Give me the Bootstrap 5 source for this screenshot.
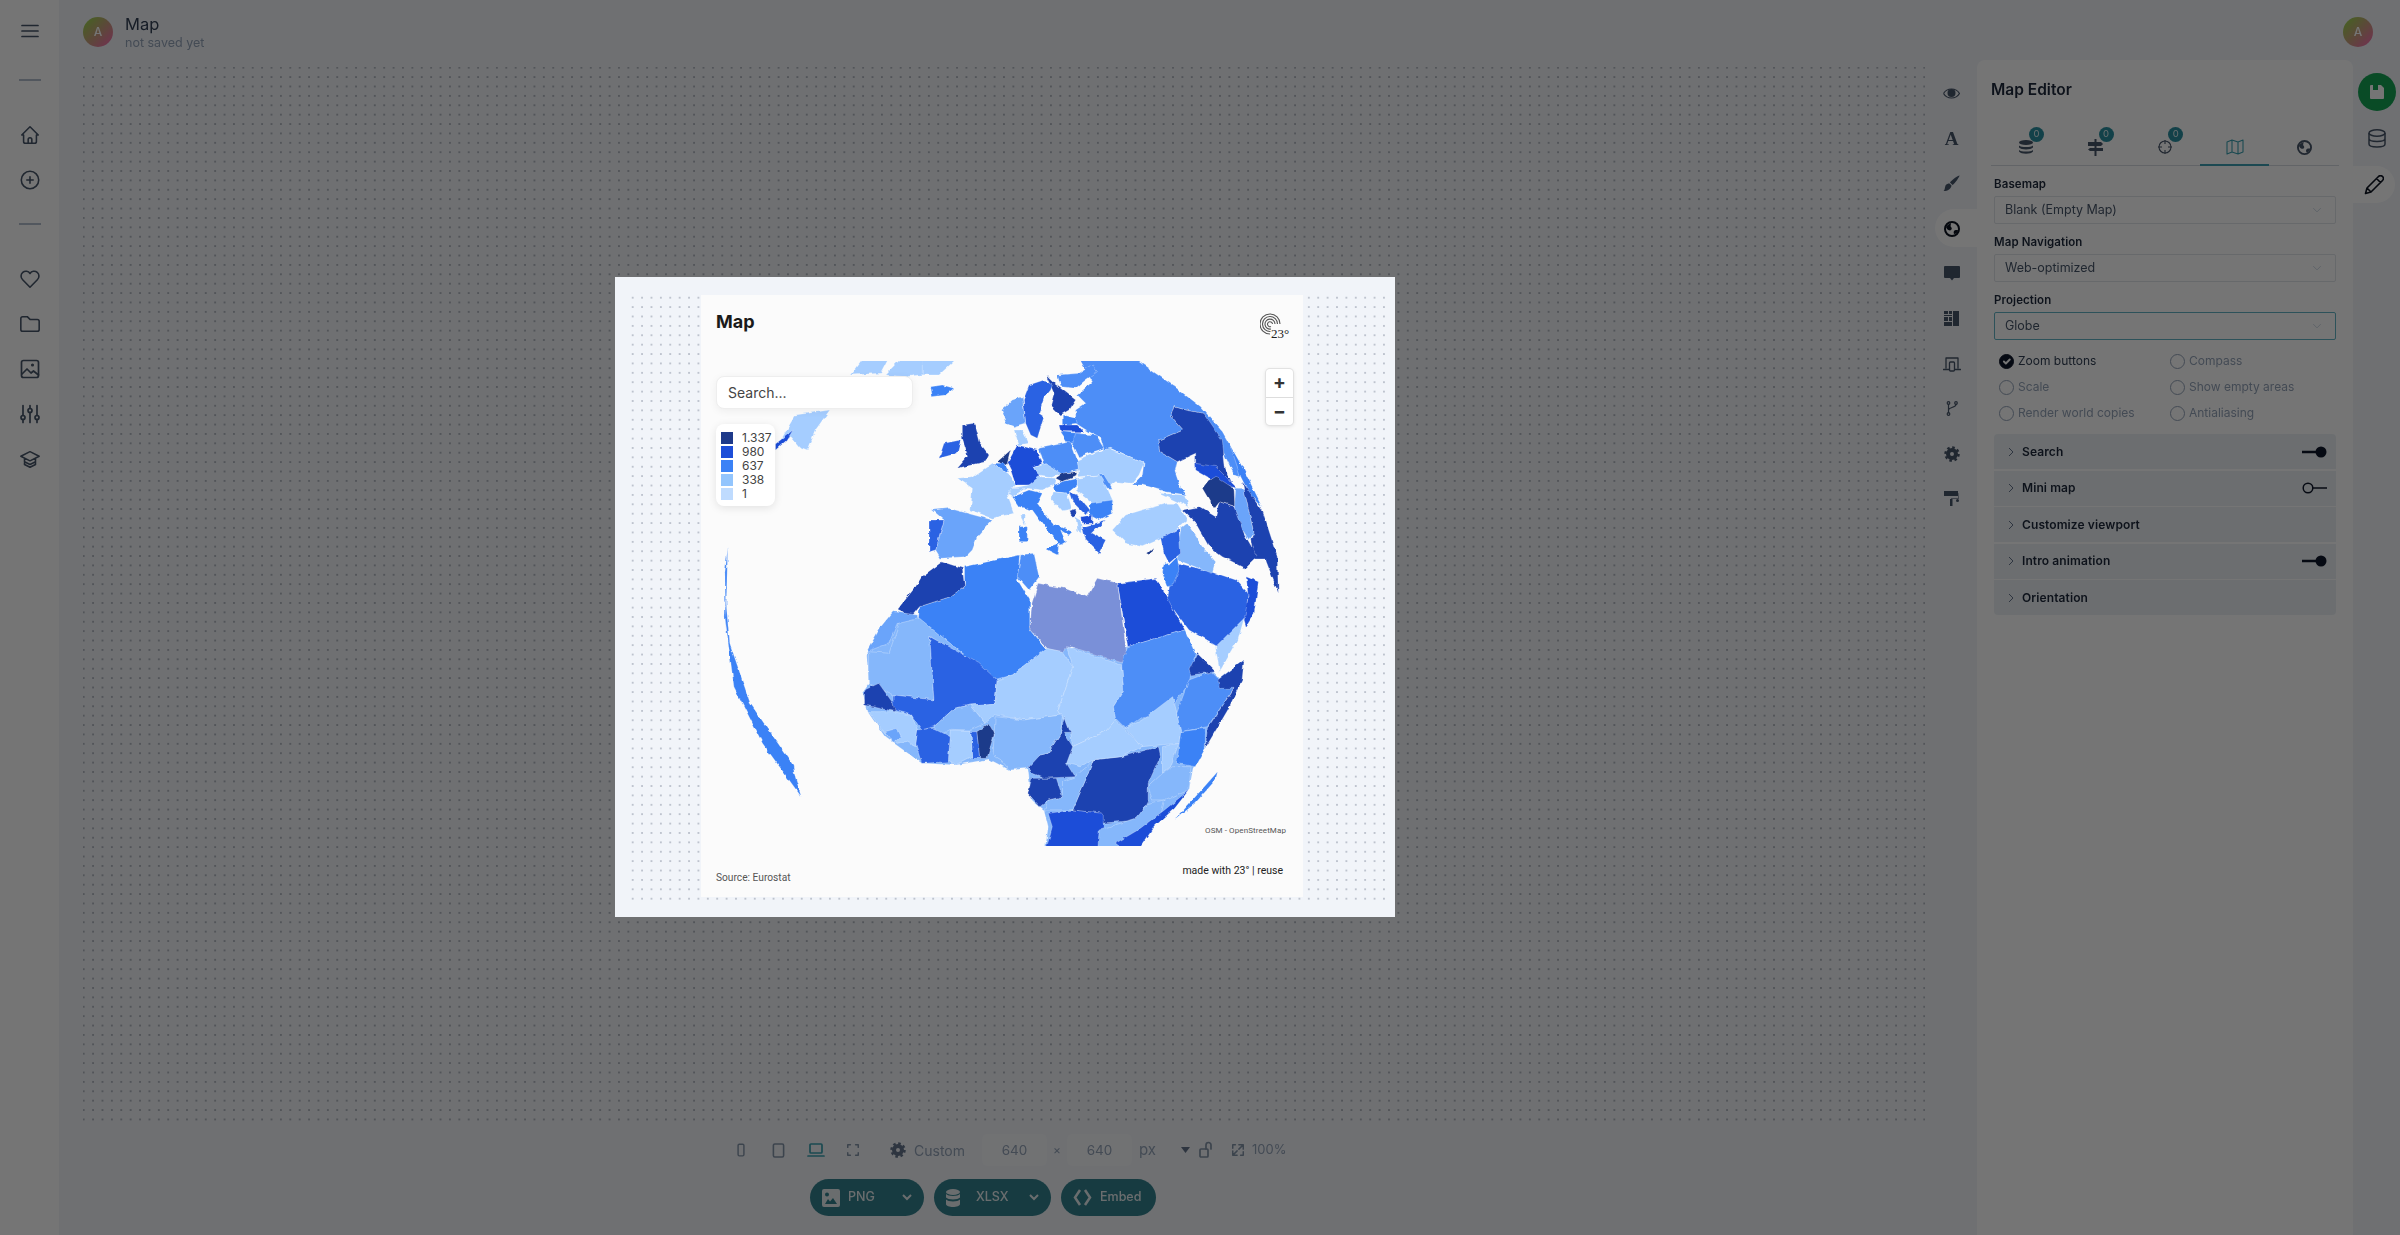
<!DOCTYPE html>
<html lang="en">

<head>
    <meta charset="UTF-8">
    <meta name="viewport" content="width=device-width, initial-scale=1.0">
    <title>Map</title>
    <link href="https://cdn.jsdelivr.net/npm/bootstrap@5.3.0/dist/css/bootstrap.min.css" rel="stylesheet">
    <style>
        html, body { height: 100%; }
        body {
            font-family: Inter, "Noto Sans", sans-serif;
            background-color: #f1f4f9;
            color: #1e293b;
            overflow: hidden;
        }
        svg { display: block; }
        .app-base { height: 100%; filter: blur(.7px); }

        /* left rail */
        .left-rail { width: 59px; background: #fff; flex: none; padding-top: 23px; }
        .left-rail hr { width: 22px; margin: 0 auto; border-color: #94a3b8; opacity: .7; border-top-width: 2px; }
        .rail-icon { height: 45px; display: flex; align-items: center; justify-content: center; color: #475569; }
        .stroke-icon { fill: none; stroke: currentColor; stroke-width: 1.7; stroke-linecap: round; stroke-linejoin: round; }

        /* top bar */
        .top-bar { height: 60px; padding: 17px 27px 0 24px; }
        .avatar {
            width: 30px; height: 30px; border-radius: 50%; flex: none;
            background: linear-gradient(135deg, #9dd04f 10%, #f070a8 90%);
            color: #fff; font-size: 12px; font-weight: 500;
            display: flex; align-items: center; justify-content: center;
        }
        .doc-title { font-size: 16.5px; line-height: 20px; margin-top: -3px; color: #334155; }
        .doc-status { font-size: 12.5px; line-height: 18px; color: #94a3b8; }

        /* canvas */
        .dot-field {
            background-image: radial-gradient(circle, #8a909c .5px, transparent .9px);
            background-size: 9.4px 9.4px;
        }
        .work-canvas { margin: 7px 7px 0 24px; height: 1059px; width: 1842px; background-position: -4px -4px; }
        .size-bar { padding-left: 663px; height: 48px; font-size: 14px; color: #94a3b8; }
        .size-bar .tool-slot { width: 37.5px; display: flex; justify-content: center; color: #8494a8; }
        .size-bar .tool-slot.is-on { color: #3aa0b0; }
        .size-icon { color: #8494a8; }
        .custom-size { margin-left: 18px; width: 92px; }
        .size-input {
            width: 65px; height: 32px; background: #f6f8fb; border-radius: 5px; font-size: 13.5px;
            color: #94a3b8; display: flex; align-items: center; justify-content: center;
        }
        .export-row { padding-left: 751px; gap: 10px; margin-top: 5px; }
        .export-btn {
            height: 37px; background: #32828f; color: #e8eef0; border: 0; padding: 0 12px; font-size: 12.5px; font-weight: 500;
            display: flex; align-items: center; gap: 8px; border-radius: 19px;
        }

        /* icon tabs */
        .tool-column { width: 52px; flex: none; padding-top: 11px; position: relative; }
        .tool-item { height: 45px; display: flex; align-items: center; justify-content: center; color: #475569; padding-left: 1px; width: 52px; padding-right: 0; }
        .tool-item.is-on { color: #0b1220; position: relative; }
        .tool-item.is-on::before {
            content: ""; position: absolute; left: 10px; right: 0; top: 3px; bottom: 4px; background: #fff;
            border-radius: 19px 0 0 19px; z-index: 0;
        }
        .tool-item > * { position: relative; z-index: 1; }
        .serif-glyph { font-family: "Liberation Serif", serif; font-weight: 700; font-size: 19px; line-height: 1; }

        /* editor panel */
        .editor-panel { width: 376px; flex: none; background: #fff; border-radius: 8px 8px 0 0; padding: 20px 14px; }
        .panel-title { font-size: 15.5px; font-weight: 600; line-height: 20px; margin: 0 0 25px; color: #1e293b; }
        .panel-tabs { border-bottom: 1px solid #d5dae1; height: 41px; margin-bottom: 10px; }
        .panel-tab { flex: 1 1 0; display: flex; align-items: center; justify-content: center; position: relative; color: #475569; padding-top: 4px; }
        .panel-tab.is-on { color: #3aa0b0; border-bottom: 2px solid #3ea0b4; height: 41px; }
        .count-dot {
            position: absolute; top: 2px; left: 38px; width: 15px; height: 15px; border-radius: 50%;
            background: #2a8fa0; color: #e6f0f2; font-size: 9.5px; display: flex; align-items: center; justify-content: center;
        }
        .field-block { padding: 0 3px; }
        .field-label { font-size: 11.5px; font-weight: 600; line-height: 16px; margin: 0 0 4px; color: #1e293b; display: block; letter-spacing: .1px; }
        .field-select {
            height: 28px; font-size: 12.5px; padding: 0 10px; border-radius: 2px; border-color: #e0e4e9;
            margin-bottom: 10px; color: #475569; background-position: right 12px center; background-size: 12px 10px;
            background-image: url("data:image/svg+xml,%3csvg xmlns='http://www.w3.org/2000/svg' viewBox='0 0 16 16'%3e%3cpath fill='none' stroke='%23cbd5e1' stroke-width='1.500' d='m2 5 6 6 6-6'/%3e%3c/svg%3e");
        }
        .field-select.is-on { border-color: #63b4c4; margin-bottom: 0; }
        .opts-grid { display: grid; grid-template-columns: 171px 1fr; row-gap: 6px; padding: 11px 0 11px 5px; }
        .opt-item { display: flex; align-items: center; gap: 4px; font-size: 12px; color: #94a3b8; min-height: 20px; margin: 0; padding: 0; }
        .opt-item.is-on { color: #334155; }
        .opt-item .form-check-input {
            width: 15px; height: 15px; margin: 0; border-radius: 50%; border: 1.5px solid #94a3b8; background-color: transparent; float: none; flex: none;
        }
        .opt-item .form-check-input:checked { background-color: #0f172a; border-color: #0f172a; }
        .fold-list { display: flex; flex-direction: column; gap: 1.5px; }
        .fold-row {
            height: 35px; background: #ecf0f4; padding: 0 9px 0 14px; display: flex; align-items: center; gap: 8px;
            font-size: 12px; font-weight: 600; color: #1e293b; letter-spacing: .1px;
        }
        .fold-row:first-child { border-radius: 4px 4px 0 0; }
        .fold-row:last-child { border-radius: 0 0 4px 4px; }

        /* right rail */
        .right-rail { width: 47px; flex: none; position: relative; padding-top: 13px; color: #475569; }
        .save-fab { width: 38px; height: 38px; border-radius: 50%; background: #15a354; margin-left: 5px; display: flex; align-items: center; justify-content: center; }
        .data-slot { height: 54px; display: flex; align-items: center; justify-content: center; width: 48px; }
        .pencil-slot { width: 42px; height: 37px; background: #fff; border-radius: 0 19px 19px 0; display: flex; align-items: center; justify-content: center; color: #0b1220; margin-top: 1px; }

        /* dimmed layer */
        .dim-layer {
            position: absolute; inset: 0; background: rgba(0, 0, 0, .54);
            padding: 0 450px 41px 60px; display: flex; align-items: center; justify-content: center;
        }
        .preview-sheet { width: 780px; height: 640px; background: #f1f4f9; padding: 16px 10px 12px 13px; position: relative; }
        .sheet-dots { height: 100%; padding: 2px 0 0 73px; background-image: radial-gradient(circle, #b4bac6 .6px, transparent 1px); background-size: 9.4px 9.4px; }
        .map-card { width: 602px; height: 602px; background: #fbfbfb; display: flex; flex-direction: column; }
        .map-head { height: 66px; padding: 16px 15px 0; display: flex; justify-content: space-between; }
        .map-name { font-size: 18px; font-weight: 700; line-height: 22px; margin: 0; color: #1a1a1a; }
        .map-stage { position: relative; height: 485px; }
        .map-search {
            position: absolute; left: 15px; top: 15px; width: 197px; height: 33px; background: #fff; border-radius: 8px; border: 1px solid #eee;
            box-shadow: 0 2px 8px rgba(0,0,0,.06); padding: 0 11px; font-size: 14px; line-height: 31px; color: #444;
        }
        .map-legend {
            position: absolute; left: 15px; top: 63px; width: 59px; height: 82px; background: #fff; border-radius: 8px;
            box-shadow: 0 2px 8px rgba(0,0,0,.1); padding: 7px 5px; font-size: 12px; line-height: 14px; color: #444;
        }
        .legend-row { display: flex; gap: 9px; height: 14px; align-items: center; }
        .legend-swatch { width: 12px; height: 12px; flex: none; }
        .zoom-box {
            position: absolute; left: 565px; top: 8px; width: 27px; height: 56px; background: #fff; border-radius: 4px;
            box-shadow: 0 0 0 1px #e2e2e2, 0 1px 4px rgba(0,0,0,.15); display: flex; flex-direction: column;
        }
        .zoom-box span { flex: 1; display: flex; align-items: center; justify-content: center; font-size: 19px; font-weight: 700; color: #333; line-height: 1; }
        .zoom-box span + span { border-top: 1px solid #ddd; }
        .osm-note { position: absolute; right: 17px; top: 464px; font-size: 8px; font-family: Roboto, sans-serif; color: #555; line-height: 12px; letter-spacing: .1px; }
        .map-foot { padding: 18px 20px 0 15px; display: flex; justify-content: space-between; align-items: flex-start; font-family: Roboto, sans-serif; }
        .source-note { font-size: 10.2px; color: #555; margin-top: 7px; line-height: 14px; }
        .made-note { font-size: 10.5px; color: #222; line-height: 14px; }

        .f0 { fill: #7a90d8; } .f1 { fill: #1e3a8a; } .f2 { fill: #1e43b0; } .f3 { fill: #1d4ed8; } .f4 { fill: #2b62e3; }
        .f5 { fill: #3b82f6; } .f6 { fill: #4d8ef7; } .f7 { fill: #6ba4fa; } .f8 { fill: #85b7fb; } .f9 { fill: #a5cdff; }
        .map-shapes polygon { stroke: rgba(255,255,255,.55); stroke-width: .5; vector-effect: non-scaling-stroke; stroke-linejoin: round; }
    </style>
</head>

<body class="position-relative">
    <div class="app-base d-flex">
    <!-- left rail -->
    <aside class="left-rail">
        <div class="rail-icon mb-3" style="height:16px">
            <svg width="18" height="14" viewBox="0 0 18 14" class="stroke-icon"><path d="M1 1.5h16M1 7h16M1 12.5h16" /></svg>
        </div>
        <hr style="margin-top:40px">
        <div style="height:31px"></div>
        <div class="rail-icon"><svg width="22" height="22" viewBox="0 0 24 24" class="stroke-icon"><path d="M5 12H3l9-9 9 9h-2M5 12v7a2 2 0 0 0 2 2h10a2 2 0 0 0 2-2v-7M10 21v-4a2 2 0 0 1 4 0v4" /></svg></div>
        <div class="rail-icon"><svg width="22" height="22" viewBox="0 0 24 24" class="stroke-icon"><circle cx="12" cy="12" r="9.5" /><path d="M12 8.5v7M8.5 12h7" /></svg></div>
        <hr style="margin-top:21px">
        <div style="height:31px"></div>
        <div class="rail-icon"><svg width="22" height="22" viewBox="0 0 24 24" class="stroke-icon"><path d="M20 12.8 12 21l-8-8.2A5.3 5.3 0 1 1 12 6a5.3 5.3 0 1 1 8 6.8" /></svg></div>
        <div class="rail-icon"><svg width="22" height="22" viewBox="0 0 24 24" class="stroke-icon"><path d="M4 4h5l3 3h8a2 2 0 0 1 2 2v9a2 2 0 0 1-2 2H4a2 2 0 0 1-2-2V6a2 2 0 0 1 2-2" /></svg></div>
        <div class="rail-icon"><svg width="20" height="20" viewBox="0 0 20 20" class="stroke-icon"><rect x="1.5" y="1.5" width="17" height="17" rx="2" /><path d="m2 15 5-5 4 4 2.5-2 5 4" /><circle cx="12.5" cy="6" r=".7" /></svg></div>
        <div class="rail-icon"><svg width="20" height="20" viewBox="0 0 20 20" class="stroke-icon"><path d="M3 1.5v10M3 15.5v3M10 1.5v3M10 8.5v10M17 1.5v10M17 15.5v3" /><circle cx="3" cy="13.5" r="2" /><circle cx="10" cy="6.5" r="2" /><circle cx="17" cy="13.5" r="2" /></svg></div>
        <div class="rail-icon"><svg width="22" height="22" viewBox="0 0 24 24" class="stroke-icon"><path d="M22 9 12 4 2 9l10 5 10-5M6 11.5V18l6 3 6-3v-6.500M6 15l6 3 6-3" /></svg></div>
    </aside>

    <div class="d-flex flex-column flex-grow-1" style="min-width:0">
        <!-- top bar -->
        <header class="top-bar d-flex justify-content-between align-items-start">
            <div class="d-flex gap-2">
                <div class="avatar me-1">A</div>
                <div>
                    <div class="doc-title">Map</div>
                    <div class="doc-status">not saved yet</div>
                </div>
            </div>
            <div class="avatar">A</div>
        </header>

        <div class="d-flex flex-grow-1" style="min-height:0">
            <!-- canvas -->
            <section class="flex-grow-1" style="min-width:0">
                <div class="work-canvas dot-field"></div>
                <div class="size-bar d-flex align-items-center">
                    <span class="tool-slot"><svg width="10" height="16" viewBox="0 0 12 18" class="stroke-icon"><rect x="2.500" y="2" width="7" height="14" rx="1.500" /></svg></span>
                    <span class="tool-slot"><svg width="13" height="17" viewBox="0 0 14 18" class="stroke-icon"><rect x="1.500" y="2" width="11" height="14" rx="1.500" /></svg></span>
                    <span class="tool-slot is-on"><svg width="18" height="16" viewBox="0 0 18 16" class="stroke-icon"><rect x="3" y="2" width="12" height="9" rx="1" /><path d="M1 14h16" /></svg></span>
                    <span class="tool-slot"><svg width="14" height="14" viewBox="0 0 16 16" class="stroke-icon"><path d="M2 5V2h3M11 2h3v3M14 11v3h-3M5 14H2v-3" /></svg></span>
                    <span class="custom-size d-flex align-items-center gap-2">
                        <svg width="16" height="16" viewBox="0 0 20 20" fill="none" stroke="#64748b"><circle cx="10" cy="10" r="5" stroke-width="5" /><circle cx="10" cy="10" r="8.200" stroke-width="3" stroke-dasharray="3.200 3.240" /></svg>
                        Custom
                    </span>
                    <span class="size-input">640</span>
                    <span class="text-center" style="width:20px;font-size:12px">×</span>
                    <span class="size-input">640</span>
                    <span style="margin-left:7px;width:42px;font-size:15px">px</span>
                    <svg width="9" height="6" viewBox="0 0 9 6" fill="#64748b"><path d="M0 0h9L4.500 6z" /></svg>
                    <svg class="stroke-icon size-icon ms-2" width="16" height="18" viewBox="0 0 16 18"><rect x="2" y="8" width="8" height="8" rx="1" /><path d="M8 8V4a2.500 2.500 0 0 1 5 0v4" /></svg>
                    <svg class="stroke-icon size-icon" style="margin-left:17px" width="14" height="14" viewBox="0 0 16 16"><path d="M9 2h5v5M14 2 9 7M7 14H2V9M2 14l5-5M2 6V2h3M14 10v4h-3" /></svg>
                    <span style="margin-left:7px;font-size:13px">100%</span>
                </div>
                <div class="export-row d-flex">
                    <button class="export-btn" style="width:114px">
                        <svg width="18" height="18" viewBox="0 0 18 18" fill="#e8eef0"><path d="M2 0h14a2 2 0 0 1 2 2v14a2 2 0 0 1-2 2H2a2 2 0 0 1-2-2V2a2 2 0 0 1 2-2m1 15h12l-4-6-3 3.500L6 10zM5 3.500a2 2 0 1 0 0 4 2 2 0 0 0 0-4" fill-rule="evenodd" /></svg>
                        PNG
                        <svg class="ms-auto" width="10" height="7" viewBox="0 0 10 7" fill="none" stroke="#e8eef0" stroke-width="2"><path d="m1 1 4 4 4-4" /></svg>
                    </button>
                    <button class="export-btn" style="width:117px">
                        <svg width="14" height="18" viewBox="0 0 14 18" fill="#e8eef0"><ellipse cx="7" cy="3" rx="7" ry="3" /><path d="M0 5c2 2.500 12 2.500 14 0v3.500c-2 2.500-12 2.500-14 0zM0 10.500c2 2.500 12 2.500 14 0V15c0 4-14 4-14 0z" /></svg>
                        <span class="ms-2">XLSX</span>
                        <svg class="ms-auto" width="10" height="7" viewBox="0 0 10 7" fill="none" stroke="#e8eef0" stroke-width="2"><path d="m1 1 4 4 4-4" /></svg>
                    </button>
                    <button class="export-btn" style="width:95px">
                        <svg width="19" height="17" viewBox="0 0 19 17" fill="none" stroke="#e8eef0" stroke-width="2.500"><path d="M7 1 2 8.500 7 16M12 1l5 7.500L12 16" /></svg>
                        Embed
                    </button>
                </div>
            </section>

            <!-- tool tabs -->
            <nav class="tool-column">
                <div class="tool-item"><svg width="17" height="13" viewBox="0 0 17 13"><path d="M.5 6.500C4 .5 13 .5 16.500 6.500 13 12.500 4 12.500.5 6.500" fill="none" stroke="currentColor" stroke-width="1.200" /><circle cx="8.500" cy="6" r="4" fill="currentColor" /></svg></div>
                <div class="tool-item"><span class="serif-glyph">A</span></div>
                <div class="tool-item"><svg width="17" height="17" viewBox="0 0 17 17" fill="currentColor"><path d="M16.500.5c.5.5-4.500 8-7 9.500L7 7.500C8.500 5 16 0 16.500.5M6.500 8.500l2 2C8 14 5 16 .5 16c1.500-1 1-2.500 2-5.500 1-1.500 2.500-2 4-2" /></svg></div>
                <div class="tool-item is-on"><svg width="16" height="16" viewBox="0 0 16 16"><circle cx="8" cy="8" r="7" fill="none" stroke="currentColor" stroke-width="2" /><path d="M2 6c1-2 3-3 5-4 0 2-1 3 0 4s1 2 0 3-3 0-4-1zM10 13c-1-2 0-4 2-4s2 0 2 1c-1 2-2 3-4 3" fill="currentColor" /></svg></div>
                <div class="tool-item"><svg width="16" height="15" viewBox="0 0 16 15" fill="currentColor"><path d="M1 0h14a1 1 0 0 1 1 1v10a1 1 0 0 1-1 1h-5l-2 2.500L6 12H1a1 1 0 0 1-1-1V1a1 1 0 0 1 1-1" /></svg></div>
                <div class="tool-item"><svg width="15" height="15" viewBox="0 0 15 15" fill="currentColor"><path d="M0 0h4v3H0zM5 0h3v3H5zM0 4h8v1H0zM0 6h4v4H0zM5 6h3v4H5zM0 11h8v4H0zM9 0h6v15H9z" /></svg></div>
                <div class="tool-item"><svg width="18" height="16" viewBox="0 0 18 16" class="stroke-icon" style="stroke-width:1.300"><path d="M3 12V2h12v10M.5 13.500h6M11.500 13.500h6" /><rect x="6.500" y="6" width="5" height="9" rx="1" /></svg></div>
                <div class="tool-item"><svg width="12" height="15" viewBox="0 0 12 15" class="stroke-icon" style="stroke-width:1.200"><circle cx="2.500" cy="2" r="1.300" /><circle cx="10" cy="2" r="1.300" /><circle cx="2.500" cy="13" r="1.300" /><path d="M2.500 3.300v8.400M2.500 9c0-3 7.500-2 7.500-5.700" /></svg></div>
                <div class="tool-item"><svg width="16" height="16" viewBox="0 0 20 20" fill="none" stroke="currentColor"><circle cx="10" cy="10" r="5" stroke-width="5" /><circle cx="10" cy="10" r="8.200" stroke-width="3" stroke-dasharray="3.200 3.240" /></svg></div>
                <div class="tool-item"><svg width="16" height="15" viewBox="0 0 16 15" fill="currentColor"><path d="M0 0h14v5H0zM6 8h2.500v7H6z" /><path d="M14.500 2H15v6H7V7h7z" opacity=".6" /><circle cx="13.500" cy="9.500" r="1.500" /></svg></div>
            </nav>

            <!-- editor panel -->
            <section class="editor-panel">
                <h2 class="panel-title">Map Editor</h2>
                <div class="panel-tabs d-flex">
                    <div class="panel-tab"><svg width="16" height="14" viewBox="0 0 16 14" fill="currentColor"><ellipse cx="8" cy="2.500" rx="7" ry="2.500" /><path d="M1 5.500c2 2 12 2 14 0v2c-2 2.500-12 2.500-14 0zM1 10c2 2 12 2 14 0v1.500c-2 3-12 3-14 0z" /></svg><span class="count-dot">0</span></div>
                    <div class="panel-tab"><svg width="15" height="17" viewBox="0 0 15 17" fill="currentColor"><path d="M6.500 0h2v17h-2zM0 3h13l2 2-2 2H0zM2 9h13v3H2l-2-1.500z" /></svg><span class="count-dot">0</span></div>
                    <div class="panel-tab"><svg width="14" height="14" viewBox="0 0 14 14" fill="none" stroke="currentColor" stroke-width="1.100"><circle cx="7" cy="7" r="6" /><path d="M7 0v4M7 10v4M0 7h4M10 7h4" /></svg><span class="count-dot">0</span></div>
                    <div class="panel-tab is-on"><svg width="18" height="16" viewBox="0 0 18 16" fill="none" stroke="currentColor" stroke-width="1.100" stroke-linejoin="round"><path d="m1 3 5-2 6 2 5-2v12l-5 2-6-2-5 2zM6 1v12M12 3v12" /></svg></div>
                    <div class="panel-tab"><svg width="15" height="15" viewBox="0 0 16 16"><circle cx="8" cy="8" r="7" fill="none" stroke="currentColor" stroke-width="2" /><path d="M2 6c1-2 3-3 5-4 0 2-1 3 0 4s1 2 0 3-3 0-4-1zM10 13c-1-2 0-4 2-4s2 0 2 1c-1 2-2 3-4 3" fill="currentColor" /></svg></div>
                </div>

                <div class="field-block">
                    <label class="field-label">Basemap</label>
                    <select class="form-select field-select"><option>Blank (Empty Map)</option></select>
                    <label class="field-label">Map Navigation</label>
                    <select class="form-select field-select"><option>Web-optimized</option></select>
                    <label class="field-label">Projection</label>
                    <select class="form-select field-select is-on"><option>Globe</option></select>

                    <div class="opts-grid">
                        <label class="form-check opt-item is-on"><input class="form-check-input" type="checkbox" checked> Zoom buttons</label>
                        <label class="form-check opt-item"><input class="form-check-input" type="checkbox"> Compass</label>
                        <label class="form-check opt-item"><input class="form-check-input" type="checkbox"> Scale</label>
                        <label class="form-check opt-item"><input class="form-check-input" type="checkbox"> Show empty areas</label>
                        <label class="form-check opt-item"><input class="form-check-input" type="checkbox"> Render world copies</label>
                        <label class="form-check opt-item"><input class="form-check-input" type="checkbox"> Antialiasing</label>
                    </div>

                    <div class="fold-list">
                        <div class="fold-row"><svg width="6" height="10" viewBox="0 0 6 10" fill="none" stroke="#64748b"><path d="m1 1 4 4-4 4" /></svg><span class="flex-grow-1">Search</span>
                            <svg width="25" height="12" viewBox="0 0 25 12"><path d="M0 6h15" stroke="#0f172a" stroke-width="2.500" /><circle cx="19" cy="6" r="5.500" fill="#0f172a" /></svg></div>
                        <div class="fold-row"><svg width="6" height="10" viewBox="0 0 6 10" fill="none" stroke="#64748b"><path d="m1 1 4 4-4 4" /></svg><span class="flex-grow-1">Mini map</span>
                            <svg width="25" height="12" viewBox="0 0 25 12"><path d="M10 6h15" stroke="#0f172a" stroke-width="1.500" /><circle cx="6" cy="6" r="4.800" fill="none" stroke="#0f172a" stroke-width="1.500" /></svg></div>
                        <div class="fold-row"><svg width="6" height="10" viewBox="0 0 6 10" fill="none" stroke="#64748b"><path d="m1 1 4 4-4 4" /></svg><span class="flex-grow-1">Customize viewport</span></div>
                        <div class="fold-row"><svg width="6" height="10" viewBox="0 0 6 10" fill="none" stroke="#64748b"><path d="m1 1 4 4-4 4" /></svg><span class="flex-grow-1">Intro animation</span>
                            <svg width="25" height="12" viewBox="0 0 25 12"><path d="M0 6h15" stroke="#0f172a" stroke-width="2.500" /><circle cx="19" cy="6" r="5.500" fill="#0f172a" /></svg></div>
                        <div class="fold-row"><svg width="6" height="10" viewBox="0 0 6 10" fill="none" stroke="#64748b"><path d="m1 1 4 4-4 4" /></svg><span class="flex-grow-1">Orientation</span></div>
                    </div>
                </div>
            </section>

            <!-- right rail -->
            <aside class="right-rail">
                <div class="save-fab"><svg width="14" height="14" viewBox="0 0 14 14"><path d="M1 0h10l3 3v10a1 1 0 0 1-1 1H1a1 1 0 0 1-1-1V1a1 1 0 0 1 1-1" fill="#fff" /><rect x="3" y="0" width="5" height="5" fill="#15a354" /></svg></div>
                <div class="data-slot"><svg width="18" height="19" viewBox="0 0 18 19" fill="none" stroke="currentColor" stroke-width="1.500"><ellipse cx="9" cy="4" rx="8" ry="3.200" /><path d="M1 4v11c0 4 16 4 16 0V4M1 9.500c0 4 16 4 16 0" /></svg></div>
                <div class="pencil-slot"><svg width="20" height="20" viewBox="0 0 20 20" fill="none" stroke="currentColor" stroke-width="1.600" stroke-linejoin="round"><path d="M1.500 18.500 3 13 14.500 1.500a2 2 0 0 1 4 4L7 17zM3 13l4 4M12.500 3.500l4 4" /></svg></div>
            </aside>
        </div>
    </div>
    </div>

    <!-- dimmed layer with map preview -->
    <div class="dim-layer">
        <div class="preview-sheet">
            <div class="sheet-dots">
            <div class="map-card">
                <div class="map-head">
                    <h1 class="map-name">Map</h1>
                    <svg width="30" height="30" viewBox="0 0 30 30" style="margin-top:1px;margin-right:-2px">
                        <g fill="none" stroke="#555" stroke-width="1.100">
                            <path d="M10 22A10 10 0 1 1 20 12" />
                            <path d="M10.500 19.500A7.500 7.500 0 1 1 17.500 12" />
                            <path d="M11 17A5 5 0 1 1 15 12" />
                            <path d="M11 14.500A2.500 2.500 0 1 1 12.500 12" />
                        </g>
                        <text x="11" y="26" font-family="Liberation Serif, serif" font-size="13" fill="#222">23°</text>
                    </svg>
                </div>
                <div class="map-stage">
                    <svg class="map-shapes" width="602" height="485" viewBox="702 361 602 485">
                        <defs>
                            <!-- roughens the hand drawn borders so they read as coastlines -->
                            <filter id="coast" filterUnits="userSpaceOnUse" x="702" y="330" width="602" height="550">
                                <feTurbulence type="fractalNoise" baseFrequency=".14" numOctaves="2" seed="4" result="n" />
                                <feDisplacementMap in="SourceGraphic" in2="n" scale="4" xChannelSelector="R" yChannelSelector="G" />
                                <feGaussianBlur stdDeviation=".3" />
                            </filter>
                        </defs>
                        <g filter="url(#coast)">
                        <!-- africa backing, coordinates read off a crop of the map -->
                        <g transform="translate(690 600) scale(.40816 .33333)">
                            <polygon class="f8" points="500,35 565,55 700,190 875,145 1075,140 1215,90 1240,160 1300,235 1360,180 1265,445 1235,505 1225,570 1140,680 1090,770 870,770 880,680 870,630 840,600 830,505 785,510 735,478 655,495 570,490 480,410 440,340 425,275 440,250 435,155 470,80" />
                        </g>
                        <g transform="translate(690 340) scale(.40816 .33333)">
                            <polygon class="f9" points="395,105 440,30 500,30 470,100" />
                            <polygon class="f9" points="480,105 540,30 665,30 600,100 530,110" />
                            <polygon class="f9" points="260,225 345,210 310,270 290,330 270,320 250,290 225,300" />
                            <polygon class="f3" points="255,270 240,300 212,330 212,312" />
                            <polygon class="f4" points="1175,735 1200,670 1280,695 1340,720 1370,760 1365,830 1295,920 1225,870 1170,780" />
                            <polygon class="f3" points="1365,710 1395,725 1385,820 1365,860 1360,840 1370,770" />
                            <polygon class="f3" points="1050,730 1145,715 1215,870 1075,920" />
                            <polygon class="f0" points="840,790 855,730 920,745 975,770 1000,715 1050,730 1075,965 1060,968 935,920 915,935 875,925 835,870" />
                            <polygon class="f5" points="675,680 810,645 805,720 835,780 835,870 875,930 790,1005 745,1020 710,980 562,835 565,800 640,770 675,740" />
                            <polygon class="f2" points="620,665 670,685 675,740 640,770 565,800 545,830 510,810 555,740 570,710" />
                            <polygon class="f5" points="95,620 90,870 88,700" />
                        </g>
                        <g transform="translate(690 600) scale(.40816 .33333)">
                            <polygon class="f5" points="90,0 100,130 150,310 255,495 258,520 275,590 180,430 110,260 88,50" />
                            <polygon class="f9" points="1290,140 1360,55 1345,120 1300,215" />
                            <polygon class="f7" points="500,35 560,45 560,75 510,70 490,130 435,155 470,80" />
                            <polygon class="f8" points="515,70 565,55 700,190 590,110 600,300 500,285 440,250 440,155 490,160" />
                            <polygon class="f4" points="590,110 710,190 755,240 750,310 690,315 650,325 600,380 570,390 545,345 500,330 500,285 600,300" />
                            <polygon class="f9" points="875,145 915,155 940,200 905,330 915,345 820,360 750,345 725,370 690,315 750,310 755,240 790,225" />
                            <polygon class="f9" points="925,140 1060,195 1065,270 1040,320 1050,360 1020,395 940,440 935,400 905,330 940,200" />
                            <polygon class="f6" points="1075,140 1215,90 1240,160 1225,250 1195,300 1180,340 1110,350 1070,385 1045,355 1040,320 1065,270 1060,195" />
                            <polygon class="f9" points="1070,385 1110,360 1185,290 1200,360 1205,390 1200,430 1110,440" />
                            <polygon class="f6" points="1225,240 1280,215 1300,240 1335,265 1270,380 1205,395 1195,340" />
                            <polygon class="f2" points="1225,210 1245,160 1290,215 1230,225" />
                            <polygon class="f2" points="1360,180 1355,240 1320,330 1265,445 1270,385 1335,265 1300,265 1295,240" />
                            <polygon class="f5" points="1205,395 1265,385 1265,445 1240,500 1195,490" />
                            <polygon class="f9" points="1160,440 1200,430 1180,500 1160,520" />
                            <polygon class="f8" points="1185,500 1230,500 1225,570 1170,600 1135,600 1125,560 1160,520" />
                            <polygon class="f2" points="990,480 1060,470 1150,440 1155,470 1125,550 1125,600 1100,660 1010,670 1010,640 940,630 975,530" />
                            <polygon class="f9" points="940,440 1020,395 1045,360 1070,390 1110,440 1060,470 985,480 960,500 925,490 925,460" />
                            <polygon class="f2" points="920,350 935,400 920,400 940,440 925,490 945,530 870,535 840,520 830,490 860,465 880,460 910,400" />
                            <polygon class="f8" points="750,350 820,360 915,345 910,400 880,460 860,465 830,505 785,510 765,480 745,465" />
                            <polygon class="f1" points="705,395 735,372 748,400 730,475 712,475" />
                            <polygon class="f4" points="690,395 705,395 712,475 695,475" />
                            <polygon class="f9" points="640,390 690,390 695,470 655,495 635,480" />
                            <polygon class="f8" points="600,380 650,325 690,315 725,370 690,390 640,388 610,410" />
                            <polygon class="f4" points="560,390 600,385 640,410 635,485 570,490 555,430" />
                            <polygon class="f9" points="440,335 500,335 545,345 560,390 555,440 530,425 510,430 475,395" />
                            <polygon class="f7" points="480,395 510,385 520,410 500,430" />
                            <polygon class="f2" points="430,270 465,250 500,310 505,335 430,315" />
                            <polygon class="f8" points="945,530 975,500 990,480 975,530 940,630 870,630 880,600 915,590 915,545" />
                            <polygon class="f2" points="840,535 900,535 915,590 880,600 860,620 830,580" />
                            <polygon class="f3" points="880,640 940,630 1015,640 1015,690 1000,770 870,770 890,680" />
                            <polygon class="f8" points="1000,770 1005,690 1095,655 1125,610 1165,600 1155,650 1100,690 1085,770" />
                            <polygon class="f3" points="1090,770 1045,730 1100,690 1165,630 1225,570 1190,625 1140,680" />
                            <polygon class="f5" points="1190,660 1295,515 1290,540 1240,610" />
                        </g>
                        <!-- europe and the near east -->
                        <g transform="translate(930 360) scale(.33333)">
                            <polygon class="f5" points="600,-15 730,75 815,140 880,215 940,320 1000,440 960,400 900,280 825,160 730,120" />
                            <polygon class="f6" points="445,-15 600,-15 730,75 815,140 880,215 905,260 935,350 915,345 880,270 825,160 770,150 735,140 725,170 760,210 690,240 695,275 745,305 738,335 755,385 775,405 710,395 640,375 610,375 640,345 645,310 610,295 545,265 525,270 515,235 480,215 440,190 440,150 470,130 445,105 490,65 470,30" />
                            <polygon class="f2" points="735,140 770,150 825,160 880,240 890,330 915,385 850,350 800,320 800,280 745,305 695,275 690,240 760,210 725,170" />
                            <polygon class="f3" points="800,310 860,320 925,385 880,370 835,350 800,330" />
                            <polygon class="f1" points="835,365 860,350 915,385 918,440 870,425 855,445 820,385" />
                            <polygon class="f7" points="920,385 945,385 975,520 960,540 915,470" />
                            <polygon class="f2" points="940,365 1000,450 1045,590 1048,700 1010,600 975,600 965,540 975,520" />
                            <polygon class="f2" points="760,450 810,440 860,470 870,425 915,440 945,520 985,590 950,625 880,590 840,560 800,490" />
                            <polygon class="f9" points="690,400 770,405 780,440 745,425" />
                            <polygon class="f9" points="550,510 590,465 640,450 715,430 745,430 775,480 740,510 700,535 640,560 590,550" />
                            <polygon class="f1" points="655,580 672,565 665,585" />
                            <polygon class="f8" points="755,505 775,490 820,560 860,605 850,640 745,600" />
                            <polygon class="f4" points="695,535 750,505 755,580 720,610 705,580" />
                            <polygon class="f5" points="705,610 720,615 745,590 750,630 735,675 715,680 700,640" />
                            <polygon class="f2" points="350,45 375,70 395,85 440,120 420,150 395,165 365,135 375,100" />
                            <polygon class="f4" points="345,60 370,75 365,90 345,115 330,160 345,170 325,235 305,225 290,190 283,120 300,75" />
                            <polygon class="f6" points="385,45 450,40 490,15 505,35 470,60 440,85 395,80" />
                            <polygon class="f7" points="280,110 290,190 255,200 230,190 218,150 250,120" />
                            <polygon class="f9" points="255,210 280,210 300,250 270,255" />
                            <polygon class="f2" points="100,195 135,190 150,245 180,285 170,305 85,325 115,290 110,265 100,235" />
                            <polygon class="f4" points="45,250 95,240 85,280 30,295" />
                            <polygon class="f5" points="5,80 40,75 75,85 50,105 10,110" />
                            <polygon class="f9" points="-20,-15 95,-15 30,45 -20,45" />
                            <polygon class="f5" points="400,165 440,175 445,190 400,195" />
                            <polygon class="f3" points="390,195 445,195 465,215 395,215" />
                            <polygon class="f5" points="395,215 455,220 445,250 415,245" />
                            <polygon class="f6" points="440,220 500,225 525,265 450,290 430,250" />
                            <polygon class="f6" points="330,265 425,245 445,300 450,330 385,345 345,310" />
                            <polygon class="f3" points="265,255 325,270 340,310 315,320 335,350 320,375 260,375 245,330 235,310" />
                            <polygon class="f1" points="205,305 245,270 235,310 230,315" />
                            <polygon class="f5" points="190,310 225,310 240,340 215,330" />
                            <polygon class="f9" points="315,320 345,310 395,340 365,350 330,345" />
                            <polygon class="f1" points="380,355 400,340 445,335 440,350 400,365" />
                            <polygon class="f9" points="245,385 300,375 330,350 380,355 375,375 340,390 290,385" />
                            <polygon class="f5" points="375,375 400,365 445,355 445,375 415,400 380,395" />
                            <polygon class="f9" points="445,300 490,280 540,265 610,295 645,310 630,345 610,370 560,365 535,385 510,345 450,350" />
                            <polygon class="f6" points="505,345 525,345 550,385 535,385" />
                            <polygon class="f9" points="445,355 510,345 535,385 555,430 490,430 445,395" />
                            <polygon class="f5" points="480,430 550,420 550,460 510,480 480,465" />
                            <polygon class="f4" points="420,395 445,405 480,450 470,465 430,425" />
                            <polygon class="f9" points="370,395 415,400 430,450 400,455 365,415" />
                            <polygon class="f2" points="422,455 438,450 440,470 430,472" />
                            <polygon class="f3" points="458,470 490,465 490,490 460,490" />
                            <polygon class="f9" points="440,470 455,480 460,520 445,510" />
                            <polygon class="f4" points="460,500 530,480 490,520 530,540 510,580 470,540" />
                            <polygon class="f9" points="85,355 130,350 190,310 240,345 260,375 235,405 255,460 190,475 125,450 130,385" />
                            <polygon class="f7" points="10,450 60,445 190,480 145,530 130,570 110,590 35,595 20,570 45,480" />
                            <polygon class="f4" points="0,480 45,480 20,570 0,575" />
                            <polygon class="f5" points="250,410 300,390 340,400 325,430 370,490 430,515 420,525 395,510 410,545 395,555 350,505 310,450 270,440" />
                            <polygon class="f5" points="270,500 295,500 295,545 270,545" />
                            <polygon class="f9" points="275,465 290,465 285,495" />
                            <polygon class="f5" points="345,565 390,550 385,585" />
                            <polygon class="f9" points="235,405 250,385 290,385 250,410" />
                            <polygon class="f6" points="275,585 315,580 330,650 300,690 265,650" />
                        </g>
                        </g>
                    </svg>
                    <div class="map-search">Search...</div>
                    <div class="map-legend">
                        <div class="legend-row"><span class="legend-swatch" style="background:#1e3a8a"></span>1.337</div>
                        <div class="legend-row"><span class="legend-swatch" style="background:#1d4ed8"></span>980</div>
                        <div class="legend-row"><span class="legend-swatch" style="background:#3b82f6"></span>637</div>
                        <div class="legend-row"><span class="legend-swatch" style="background:#93c5fd"></span>338</div>
                        <div class="legend-row"><span class="legend-swatch" style="background:#bfdbfe"></span>1</div>
                    </div>
                    <div class="zoom-box"><span>+</span><span>−</span></div>
                    <div class="osm-note">OSM - OpenStreetMap</div>
                </div>
                <div class="map-foot">
                    <span class="source-note">Source: Eurostat</span>
                    <span class="made-note">made with 23° | reuse</span>
                </div>
            </div>
            </div>
        </div>
    </div>

    <script src="https://cdn.jsdelivr.net/npm/bootstrap@5.3.0/dist/js/bootstrap.bundle.min.js"></script>
</body>

</html>
